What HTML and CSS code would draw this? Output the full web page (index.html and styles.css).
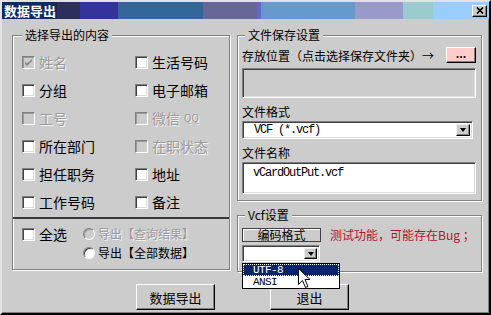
FILE: index.html
```html
<!DOCTYPE html>
<html lang="zh-CN">
<head>
<meta charset="utf-8">
<title>数据导出</title>
<link rel="stylesheet" href="styles.css">
</head>
<body>
<div class="window">
  <div class="titlebar">
    <span class="title">数据导出</span>
    <span class="close"><svg width="8" height="7" viewBox="0 0 8 7"><path d="M1 0.5L7 6.5M7 0.5L1 6.5" stroke="#000" stroke-width="1.7"/></svg></span>
  </div>
  <div class="content">
    <div class="columns">
      <fieldset class="group group-fields">
        <legend>选择导出的内容</legend>
        <div class="field-grid">
          <label class="check disabled"><span class="box"><svg width="7" height="7" viewBox="0 0 7 7"><path d="M0 2.5L2 4.5L7 0V2L2 7L0 5Z" fill="#8a8a8a"/></svg></span>姓名</label>
          <label class="check"><span class="box"></span>生活号码</label>
          <label class="check"><span class="box"></span>分组</label>
          <label class="check"><span class="box"></span>电子邮箱</label>
          <label class="check disabled"><span class="box"></span>工号</label>
          <label class="check disabled"><span class="box"></span>微信<span class="small">QQ</span></label>
          <label class="check"><span class="box"></span>所在部门</label>
          <label class="check disabled"><span class="box"></span>在职状态</label>
          <label class="check"><span class="box"></span>担任职务</label>
          <label class="check"><span class="box"></span>地址</label>
          <label class="check"><span class="box"></span>工作号码</label>
          <label class="check"><span class="box"></span>备注</label>
        </div>
        <div class="divider"></div>
        <div class="select-all">
          <label class="check all"><span class="box"></span>全选</label>
          <div class="radios">
            <label class="radio disabled"><span class="dot"></span>导出【查询结果】</label>
            <label class="radio"><span class="dot"></span>导出【全部数据】</label>
          </div>
        </div>
      </fieldset>
      <div class="right">
        <fieldset class="group group-save">
          <legend>文件保存设置</legend>
          <div class="path-row">
            <span>存放位置（点击选择保存文件夹）→</span>
            <span class="browse">...</span>
          </div>
          <div class="path-box"></div>
          <div class="label">文件格式</div>
          <div class="combo wide">
            <span class="combo-text">VCF (*.vcf)</span>
            <span class="drop-btn"><span class="tri"></span></span>
          </div>
          <div class="label">文件名称</div>
          <div class="textbox">vCardOutPut.vcf</div>
        </fieldset>
        <fieldset class="group group-vcf">
          <legend>Vcf设置</legend>
          <div class="enc-row">
            <span class="enc-head">编码格式</span>
            <span class="warn">测试功能，可能存在Bug ；</span>
          </div>
          <div class="combo-wrap">
            <div class="combo small-combo">
              <span class="combo-text"></span>
              <span class="drop-btn"><span class="tri"></span></span>
            </div>
            <ul class="dropdown">
              <li class="selected">UTF-8</li>
              <li>ANSI</li>
            </ul>
          </div>
        </fieldset>
      </div>
    </div>
    <div class="actions">
      <button class="btn">数据导出</button>
      <button class="btn">退出</button>
    </div>
  </div>
  <svg class="cursor" width="13" height="21" viewBox="0 0 13 21"><path d="M0.5 0.5V16.5L4.5 12.5L7.5 19.5L10 18.5L7 11.5H12Z" fill="#fff" stroke="#000" stroke-width="1"/></svg>
</div>
</body>
</html>
```

FILE: styles.css
```css
* { box-sizing: border-box; }
html, body { margin: 0; padding: 0; }
body {
  width: 491px;
  height: 315px;
  overflow: hidden;
  background: #cccccc;
  font-family: "Noto Sans CJK SC", "Liberation Sans", sans-serif;
  font-size: 12px;
  color: #000;
}
.window {
  position: relative;
  width: 491px;
  height: 315px;
  background: #cccccc;
  border: 2px solid;
  border-color: #e2e2e2 #000 #000 #e2e2e2;
  box-shadow: inset -1px -1px 0 #808080;
  display: flex;
  flex-direction: column;
}
.titlebar {
  height: 17px;
  display: flex;
  align-items: center;
  background: linear-gradient(to right,
    #0d2b62 0 55px, #2e2e5e 55px 78px, #333399 78px 116px,
    #336699 116px 201px, #666699 201px 255px, #6666cc 255px 259px,
    #6699cc 259px 353px, #9999cc 353px 401px, #99cccc 401px 431px,
    #99ccff 431px);
}
.title {
  color: #fff;
  font-weight: bold;
  font-size: 13px;
  line-height: 17px;
  padding-left: 2px;
}
.close {
  margin-left: auto;
  margin-right: 2px;
  width: 15px;
  height: 12px;
  background: #cccccc;
  border: 1px solid;
  border-color: #fff #000 #000 #fff;
  box-shadow: inset -1px -1px 0 #808080;
  display: flex;
  align-items: center;
  justify-content: center;
}
.content {
  flex: 1;
  padding: 8px 7px 0 10px;
}
.columns {
  display: grid;
  grid-template-columns: 218px 245px;
  column-gap: 7px;
  align-items: start;
}
.group {
  margin: 0;
  min-width: 0;
  border: 1px solid #808080;
  box-shadow: inset 1px 1px 0 #fff, 1px 1px 0 #fff;
}
.group legend {
  padding: 0 3px;
  font-size: 12px;
  line-height: 16px;
  background: #cccccc;
}
.group-fields {
  padding: 5px 0 7px 9px;
}
.field-grid {
  display: grid;
  grid-template-columns: 113px 1fr;
  grid-auto-rows: 28px;
  align-items: center;
}
.check {
  display: flex;
  align-items: center;
  gap: 4px;
  font-size: 14px;
  line-height: 18px;
}
.box {
  width: 13px;
  height: 13px;
  flex: none;
  background: #fff;
  border: 1px solid;
  border-color: #808080 #fff #fff #808080;
  box-shadow: inset 1px 1px 0 #404040, inset -1px -1px 0 #dcdcdc;
  display: flex;
  align-items: center;
  justify-content: center;
}
.disabled { color: #9a9a9a; text-shadow: 1px 1px 0 #f4f4f4; }
.disabled .box { background: #cccccc; box-shadow: inset 1px 1px 0 #9a9a9a; }
.small { font-size: 10px; }
.divider {
  margin: 1px 0 0 -9px;
  height: 2px;
  background: #3a3a3a;
}
.select-all {
  display: flex;
  align-items: flex-start;
  padding-top: 5px;
}
.check.all {
  width: 61px;
  margin-top: 1px;
}
.radios {
  display: flex;
  flex-direction: column;
}
.radio {
  display: flex;
  align-items: center;
  gap: 3px;
  height: 19px;
  font-size: 12px;
}
.dot {
  width: 12px;
  height: 12px;
  flex: none;
  border-radius: 50%;
  background: #fff;
  border: 1px solid;
  border-color: #808080 #fff #fff #808080;
  box-shadow: inset 1px 1px 0 #404040;
}
.radio.disabled .dot { background: #cccccc; box-shadow: inset 1px 1px 0 #9a9a9a; }
.right {
  display: flex;
  flex-direction: column;
}
.group-save {
  padding: 4px 5px 6px 4px;
}
.group-save legend, .group-vcf legend { margin-left: 3px; }
.path-row {
  display: flex;
  justify-content: space-between;
  align-items: center;
  height: 16px;
  font-size: 12px;
}
.browse {
  width: 30px;
  height: 16px;
  background: #ffcccc;
  border: 1px solid;
  border-color: #fff #000 #000 #fff;
  box-shadow: inset -1px -1px 0 #808080;
  font-weight: bold;
  font-size: 11px;
  line-height: 10px;
  text-align: center;
}
.path-box {
  margin-top: 5px;
  height: 30px;
  border: 1px solid;
  border-color: #808080 #fff #fff #808080;
  box-shadow: inset 1px 1px 0 #404040, inset -1px -1px 0 #dcdcdc;
}
.label {
  margin-top: 6px;
  line-height: 16px;
  font-size: 12px;
}
.combo {
  margin-top: 1px;
  height: 18px;
  display: flex;
  align-items: center;
  background: #fff;
  border: 1px solid;
  border-color: #808080 #fff #fff #808080;
  box-shadow: inset 1px 1px 0 #404040, inset -1px -1px 0 #dcdcdc;
  padding: 2px;
}
.combo.wide { width: 231px; }
.combo-text {
  flex: 1;
  padding-left: 9px;
  font-family: "Liberation Mono", monospace;
  font-size: 12px;
  letter-spacing: -1.2px;
  white-space: pre;
}
.drop-btn {
  width: 14px;
  height: 100%;
  background: #cccccc;
  border: 1px solid;
  border-color: #eee #000 #000 #eee;
  box-shadow: inset -1px -1px 0 #808080;
  display: flex;
  align-items: center;
  justify-content: center;
}
.tri {
  width: 0;
  height: 0;
  border-left: 3.5px solid transparent;
  border-right: 3.5px solid transparent;
  border-top: 4px solid #000;
}
.textbox {
  margin-top: 1px;
  height: 32px;
  background: #fff;
  border: 1px solid;
  border-color: #808080 #fff #fff #808080;
  box-shadow: inset 1px 1px 0 #404040, inset -1px -1px 0 #dcdcdc;
  padding: 2px 0 0 10px;
  font-family: "Liberation Mono", monospace;
  font-size: 12px;
  letter-spacing: -1.2px;
  line-height: 16px;
}
.group-vcf {
  margin-top: 6px;
  padding: 3px 5px 9px 4px;
}
.enc-row {
  display: flex;
  align-items: center;
}
.enc-head {
  width: 79px;
  height: 14px;
  border: 1px solid #404040;
  box-shadow: inset 1px 1px 0 #fff;
  font-size: 12px;
  line-height: 12px;
  text-align: center;
}
.warn {
  margin-left: 9px;
  color: #b8102c;
  font-size: 12px;
}
.combo-wrap {
  position: relative;
  margin-top: 2px;
  width: 78px;
}
.small-combo {
  margin-top: 0;
  height: 17px;
}
.small-combo .drop-btn { width: 13px; }
.dropdown {
  position: absolute;
  z-index: 5;
  top: calc(100% + 1px);
  left: 0;
  width: 98px;
  margin: 0;
  padding: 0;
  list-style: none;
  background: #fff;
  border: 1px solid #000;
}
.dropdown li {
  height: 12px;
  line-height: 12px;
  padding-left: 10px;
  font-family: "Liberation Mono", monospace;
  font-size: 11px;
  letter-spacing: -0.6px;
  overflow: hidden;
}
.dropdown li.selected {
  background: #0a246a;
  color: #fff;
  outline: 1px dotted #fff;
  outline-offset: -1px;
}
.actions {
  display: flex;
  gap: 55px;
  margin-top: 12px;
  padding-left: 124px;
}
.btn {
  width: 79px;
  height: 26px;
  padding: 0;
  background: #cccccc;
  border: 1px solid;
  border-color: #fff #000 #000 #fff;
  box-shadow: inset -1px -1px 0 #808080;
  font-family: "Noto Sans CJK SC", sans-serif;
  font-size: 13px;
  color: #000;
}
.cursor {
  position: absolute;
  z-index: 10;
  left: 296px;
  top: 266px;
}
```
